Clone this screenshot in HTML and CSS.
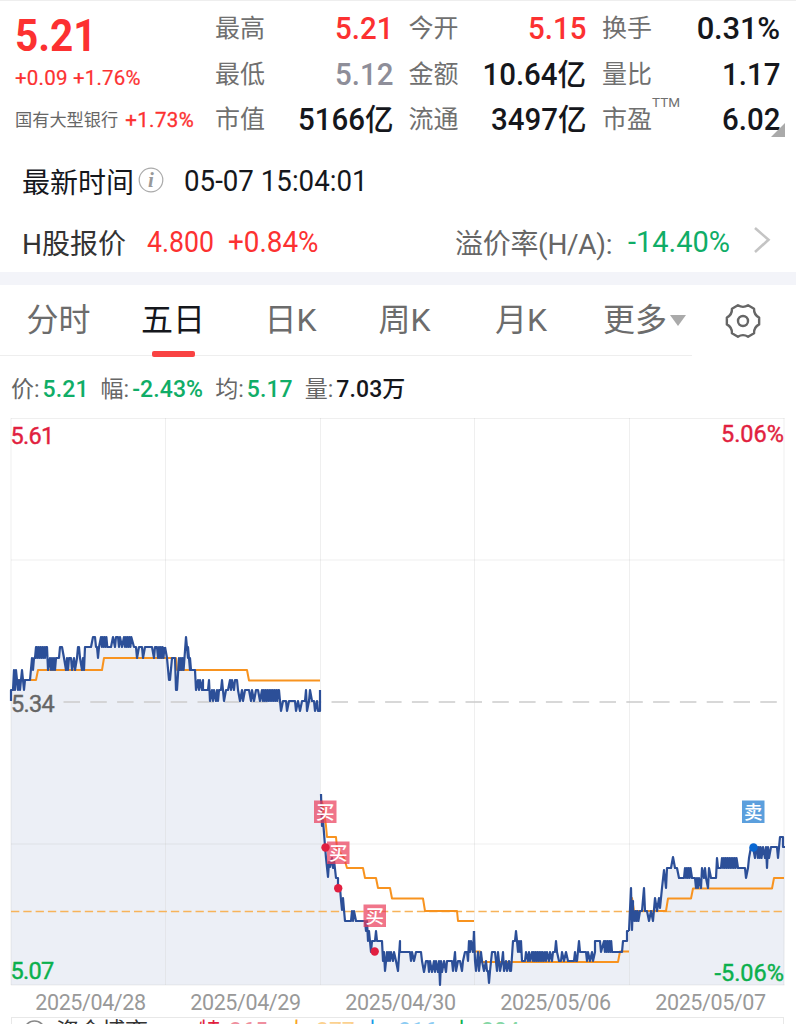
FILE: index.html
```html
<!DOCTYPE html>
<html lang="zh-CN">
<head>
<meta charset="utf-8">
<title>行情</title>
<link rel="stylesheet" href="styles.css">
</head>
<body>
<header class="quote">
  <div class="price-block">
    <div class="price">5.21</div>
    <div class="change">+0.09 +1.76%</div>
    <div class="sector">国有大型银行 <span class="sector-change">+1.73%</span></div>
  </div>
  <dl class="stats">
    <div class="stat"><dt>最高</dt><dd class="up">5.21</dd></div>
    <div class="stat"><dt>今开</dt><dd class="up">5.15</dd></div>
    <div class="stat"><dt>换手</dt><dd class="wide">0.31%</dd></div>
    <div class="stat"><dt>最低</dt><dd class="flat">5.12</dd></div>
    <div class="stat"><dt>金额</dt><dd>10.64<i>亿</i></dd></div>
    <div class="stat"><dt>量比</dt><dd>1.17</dd></div>
    <div class="stat"><dt>市值</dt><dd>5166<i>亿</i></dd></div>
    <div class="stat"><dt>流通</dt><dd>3497<i>亿</i></dd></div>
    <div class="stat"><dt>市盈<sup>TTM</sup></dt><dd>6.02</dd></div>
  </dl>
  <span class="corner"></span>
</header>

<section class="row time-row">
  <span class="time-label">最新时间</span>
  <svg class="info" viewBox="0 0 26 26"><circle cx="13" cy="13" r="11.8"/><text x="13" y="20">i</text></svg>
  <span class="time-value">05-07 15:04:01</span>
</section>
<section class="row h-row">
  <span class="h-label">H股报价</span>
  <span class="h-price">4.800</span>
  <span class="h-change">+0.84%</span>
  <span class="premium-label">溢价率(H/A):</span>
  <span class="premium">-14.40%</span>
  <svg class="chevron" viewBox="0 0 18 28"><path d="M2 2 15.500 13.800 2 26"/></svg>
</section>
<div class="band"></div>

<nav class="tabs">
  <div class="tab-list">
    <span class="tab">分时</span>
    <span class="tab active">五日</span>
    <span class="tab">日K</span>
    <span class="tab">周K</span>
    <span class="tab">月K</span>
    <span class="tab more">更多<b class="caret"></b></span>
  </div>
  <svg class="gear" viewBox="-18 -18 36 36"><path d="M16.140-3.430V3.430Q10.800 6.250 11.040 12.260L5.100 15.690Q0 12.500-5.100 15.690L-11.040 12.260Q-10.800 6.250-16.140 3.430V-3.430Q-10.800-6.250-11.040-12.260L-5.100-15.690Q0-12.500 5.100-15.690L11.040-12.260Q10.800-6.250 16.140-3.430Z"/><circle r="5"/></svg>
</nav>

<div class="legend">
  <span>价:<b class="down">5.21</b></span>
  <span>幅:<b class="down">-2.43%</b></span>
  <span>均:<b class="down">5.17</b></span>
  <span>量:<b>7.03万</b></span>
</div>

<svg class="chart" viewBox="0 412 796 576">
  <g id="areas" class="area"></g>
  <path class="grid" d="M11 418.500H784.500M11 560H784.500M11 844H784.500M11 985H784.500M11 418V985M165.500 418V985M320.500 418V985M474.500 418V985M629.500 418V985M784 418V985"/>
  <path class="mid" d="M63.500 702H784"/>
  <path class="prev" d="M11 911.500H784"/>
  <g id="averages" class="average"></g>
  <g id="prices" class="line"></g>
  <g class="buy">
    <rect x="314" y="800.500" width="22.500" height="22.500"/><text x="325.200" y="819">买</text>
    <rect x="327" y="841.500" width="22.500" height="22.500"/><text x="338.200" y="860">买</text>
    <rect x="363.500" y="904.500" width="22.500" height="22.500"/><text x="374.700" y="923">买</text>
    <circle cx="325.500" cy="847.500" r="4.200"/><circle cx="338.200" cy="888.300" r="4.200"/><circle cx="374.700" cy="951.500" r="4.200"/>
  </g>
  <g class="sell">
    <rect x="742" y="800.500" width="22.500" height="22.500"/><text x="753.200" y="819">卖</text>
    <circle cx="753.500" cy="847.500" r="4.200"/>
  </g>
  <g class="axis">
    <text class="high" x="10.500" y="444">5.61</text>
    <text class="high end" x="784" y="442">5.06%</text>
    <text class="middle" x="11" y="712">5.34</text>
    <text class="low" x="10.500" y="979">5.07</text>
    <text class="low end" x="784" y="981">-5.06%</text>
  </g>
</svg>
<div class="dates"><span>2025/04/28</span><span>2025/04/29</span><span>2025/04/30</span><span>2025/05/06</span><span>2025/05/07</span></div>

<section class="funds">
  <svg class="funds-icon" viewBox="0 0 22 22"><circle cx="11" cy="11" r="10"/></svg>
  <span class="funds-title">资金博弈</span>
  <span class="fund f1">特<em>265</em></span>
  <span class="fund f2">大<em>277</em></span>
  <span class="fund f3">中<em>-316</em></span>
  <span class="fund f4">小<em>204</em></span>
</section>
<script src="chart.js"></script>
</body>
</html>
```
FILE: styles.css
```css
* { box-sizing: border-box; }
body {
  margin: 0;
  width: 796px;
  height: 1024px;
  overflow: hidden;
  background: #fff;
  color: #15171c;
  font-family: Roboto, "Noto Sans CJK SC", sans-serif;
  white-space: nowrap;
}
svg { display: block; flex: none; }

.quote {
  position: relative;
  display: flex;
  height: 150px;
  border-top: 1px solid #eee;
  padding: 4px 16px 0 15px;
}
.price-block { width: 200px; color: #fc3131; }
.price { height: 59px; line-height: 62px; font-size: 45px; font-weight: 700; transform: scaleX(.9); transform-origin: left; }
.change { height: 29px; line-height: 28px; font-size: 20.5px; letter-spacing: .2px; -webkit-text-stroke: .2px; }
.sector { height: 50px; line-height: 54px; font-size: 17.200px; color: #666; display: flex; gap: 7px; }
.sector-change { font-size: 20.500px; letter-spacing: .4px; color: #fc3131; -webkit-text-stroke: .3px; }

.stats {
  flex: 1;
  margin: 0;
  display: grid;
  grid-template-columns: 178px 178px 178px;
  grid-template-rows: 46px 45px 44px;
  column-gap: 15.500px;
}
.stat { display: flex; justify-content: space-between; line-height: 48px; }
dt { font-size: 25px; color: #707070; }
dt sup { font-size: 13.500px; line-height: 0; vertical-align: 21px; }
dd { margin: 0; font-size: 31px; font-weight: 500; transform: scaleX(.95); transform-origin: right; }
dd i { font-style: normal; font-size: 30px; }
dd.wide { transform: none; letter-spacing: -.2px; }
dd.up { color: #fc3131; }
dd.flat { color: #8e8e99; }
.corner {
  position: absolute;
  right: 11px;
  top: 122px;
  border-left: 14px solid transparent;
  border-bottom: 14px solid #aaa;
}

.row { display: flex; align-items: center; height: 61px; padding-left: 22px; }
.time-label { font-size: 28px; }
.info { width: 26px; height: 26px; margin: -2px 20px 0 4px; fill: none; stroke: #aaa; stroke-width: 1.200; }
.info text { font: italic 700 21px "Liberation Serif", serif; fill: #999; stroke: none; text-anchor: middle; }
.time-value { font-size: 29px; transform: scaleX(.955); transform-origin: left; }
.h-label { width: 125px; font-size: 28px; color: #333; }
.h-price, .h-change { font-size: 29px; color: #fc3131; transform-origin: left; }
.h-price { width: 81px; transform: scaleX(.92); }
.h-change { width: 227px; transform: scaleX(.96); }
.premium-label { width: 173px; font-size: 28px; letter-spacing: -.3px; color: #666; }
.premium { width: 125px; font-size: 29px; color: #10ad67; }
.chevron { width: 18px; height: 28px; margin-top: -3px; fill: none; stroke: #c4c4c4; stroke-width: 2.600; }
.band { height: 13px; background: #f3f4f9; }

.tabs { display: flex; height: 71px; }
.tab-list { display: grid; grid-template-columns: 117px 112px 123px 105px 128px 107px; width: 692px; border-bottom: 1px solid #eee; }
.tab { position: relative; font-size: 32px; line-height: 71px; color: #6c6c6c; text-align: center; }
.active { color: #15171c; }
.active::after { content: ""; position: absolute; left: 35px; bottom: -1px; width: 43px; height: 6.500px; border-radius: 2px; background: #f94343; }
.more { display: flex; align-items: center; gap: 3px; padding-left: 18px; }
.caret { border: 8.500px solid transparent; border-top: 11px solid #aaa; border-bottom: 0; }
.gear { width: 36px; height: 36px; margin: 18px 0 0 33px; fill: none; stroke: #666; stroke-width: 2.400; stroke-linejoin: round; }

.legend { display: flex; height: 56px; line-height: 68px; padding-left: 11px; gap: 12px; font-size: 23px; color: #666; }
.legend b { margin-left: 3px; font-weight: 500; letter-spacing: .1px; color: #15171c; }
.legend .down { color: #10ad67; }

.chart { width: 796px; height: 576px; }
.grid { fill: none; stroke: #9996; stroke-width: 1; opacity: .4; }
.mid { stroke: #ccc; stroke-width: 1.500; stroke-dasharray: 16.500 10.300; }
.prev { stroke: #f7b35a; stroke-width: 1.500; stroke-dasharray: 8.300 4; }
.area { fill: #eceff6; }
.line, .average { fill: none; stroke-width: 2; stroke-linejoin: round; }
.line { stroke: #2c4f98; stroke-width: 2.200; }
.average { stroke: #f8931f; }
.buy rect { fill: #e93a58; opacity: .7; }
.buy circle { fill: #e11f40; }
.sell rect { fill: #5b9fdd; }
.sell circle { fill: #0967d2; }
.buy text, .sell text { font-size: 18.500px; font-weight: 500; fill: #fff; text-anchor: middle; }
.axis text { font-size: 23.500px; letter-spacing: -.7px; stroke-width: .4px; }
.axis .end { text-anchor: end; letter-spacing: 0; }
.axis .high { fill: #e11f40; stroke: #e11f40; }
.axis .middle { fill: #666; stroke: #666; }
.axis .low { fill: #0bb04d; stroke: #0bb04d; }

.dates { display: grid; grid-template-columns: repeat(5, 155px); height: 29px; padding-left: 13px; line-height: 30px; font-size: 21.500px; letter-spacing: -.4px; color: #999; text-align: center; }
.funds { display: grid; grid-template-columns: 33px 142px 87px 76px 89px 80px; margin: 0 12px 0 11px; border: 1px solid #e8e8e8; padding: 2px 0 0 11px; height: 36px; font-size: 23px; line-height: 23px; }
.funds-icon { width: 23px; height: 23px; fill: none; stroke: #888; stroke-width: 1.500; }
.funds-title { color: #333; }
.fund em { font-style: normal; margin-left: 8px; opacity: .5; }
.f1 { color: #e11f40; }
.f2 { color: #f8a51f; }
.f3 { color: #1a9ae8; }
.f4 { color: #0bb04d; }
```
FILE: chart.js
```js
// Each session is a list of "x,y" points; "x0~x1,a,b" swings between a and b.
const sessions = [
  "11,701 11,690 13,690 14,670 15,690 16,670 18,690 19,680 20,690 22,670 24,690 25,680 30,680 32,658 33,670 34,658 35,658 36,647 36~46,658,647 47,647 48,670 50,658 51,670 52,658 53,670 54,658 55,670 56,658 59,658 60,647 62,647 64,658 66,670 67,658 68,670 69,658 71,658 72,670 74,658 75,670 77,658 78,647 79,647 80,658 82,670 83,658 84,670 85,647 91,647 93,637 95,637 96,647 97,647 98,658 99,647 101~108,637,647 109,647 111,647 113,637 115,647 116,637 118,637 119,647 120,637 122,647 124,637 125~132,647,637 134,647 136,647 137,658 139,647 142,647 143,658 145,647 152,647 154,658 155,647 157,647 158,658 159~165,647,658",
  "165,647 167,658 169,680 170,680 172,658 175,658 176,690 177,690 179,658 180~184,670,658 186,637 188,658 188,647 190,670 190,658 191,670 195,670 196,690 198,680 199,690 200,680 202,690 203,680 203,690 208,690 209,680 210,701 212,690 213,701 214,690 216,701 217,690 218,701 219,690 221,690 222,680 224,701 226,690 228,690 230,680 231,690 232,680 234,690 235,680 237,680 238,690 240,701 242,690 243,701 245,690 249,690 251,701 252,690 254,701 256,690 258,690 260,701 262~279,690,701 279,690 280,701 281,711 283,701 286,701 287,711 289,701 295,701 296,711 298,701 300,711 302,701 305,701 306,690 307,711 309,701 310,690 312,701 314,701 315,711 317,701 318,711 320,711 320,690",
  "321,794 322,826 323,820 325,846 326,858 328,877 329,862 330,867 332,858 333,868 334,860 336,878 338,878 338,888 340,888 341,900 342,910 343,898 344,910 345,921 351,921 352,911 353,921 354,911 356,921 365,921 366,931 367,921 368,941 369,931 371,952 372,941 375,941 376,931 377,941 382,941 383,961 384,952 385,971 387,952 388,961 389,952 390,961 391,952 393,961 394,952 396,961 398,971 400,941 400,952 410,952 411,961 412,952 414,961 416,952 421,952 422,961 424,972 426,961 428,961 429,972 430,961 432,972 434,961 435,972 436,961 438,972 439,961 440,985 441,961 442,972 444,961 446,972 447,961 452,961 453,971 455,952 456,971 458,961 460,961 462,971 463,961 465,952 467,952 468,961 469,941 470,952 471,941 473,952 474,931",
  "474,931 475,961 476,971 478,952 479,971 481,952 482,961 484,971 486,961 487,971 488,971 489,983 490,971 492,952 495,952 497,971 498,952 500,971 502,961 503,952 504,971 506,961 507,971 509,961 510,971 511,971 513,941 515,941 516,931 517,941 518,952 519,941 520,952 521,941 522,961 525,961 526,952 528,961 529,952 530,961 532~544,952,961 545,952 546,961 547,952 549,961 550,952 552,961 553,952 555,952 556,941 557,952 559,961 561,961 562,952 564,961 566,952 568,961 574,961 575,952 576,961 577,961 579,941 580,952 586,952 587,961 588,952 590,961 592,952 593,961 595,952 595,941 600,941 601,952 604~612,941,952 612,952 622,952 623,941 627,941 627,931 629,931",
  "629,931 631,888 632,930 633,901 633~639,921,911 640,911 642,911 644,888 645,911 647,911 649,921 651,911 653,921 655,898 657,911 659,898 660,908 662,888 664,870 666,888 667,868 671,868 673,857 675,868 677,868 679,878 684,878 685,868 686~691,878,868 692,878 695,878 696,888 697,878 698,888 699,878 701,888 702,868 704,878 705,868 706,878 708,888 709,868 711,878 716,878 717,858 718,868 721,868 722,858 723~737,868,858 738,868 745,868 746,878 748,868 749,858 751,847 753,847 755,858 756,847 757~762,847,858 763,847 765,858 766,847 767,868 768,847 769,858 771,847 773,847 777,847 778,858 780,837 783,837 783,847 785,847"
];
const averages = [
  "11,690 14,690 15,680 36,680 38,670 102,670 104,658 165,658",
  "165,658 176,658 177,670 247,670 249,680.5 320,680.5",
  "321,800 323,805 326,826 327,837 336,837 337,848 344,858 347,868 363,868 365,878 376,878 378,888 390,888 392,898.5 423,898.5 425,911 457,911 458,921 474,921",
  "475,951.5 480,951.5 482,962 618,962 620,951.5 629,951.5",
  "631,898 632,898 634,911 666,911 668,898.5 691,898.5 693,888.5 772,888.5 774,878 784,878"
];
function expand(text) {
  return text.split(" ").map(part => {
    if (!part.includes("~")) return part;
    const [range, a, b] = part.split(",");
    const [from, to] = range.split("~").map(Number);
    const points = [];
    for (let x = from, i = 0; x <= to; x += 0.9, i++) points.push(x.toFixed(1) + "," + (i % 2 ? b : a));
    return points.join(" ");
  }).join(" ");
}
function draw(id, d) {
  const path = document.createElementNS("http://www.w3.org/2000/svg", "path");
  path.setAttribute("d", d);
  document.getElementById(id).append(path);
}
const edges = [11, 165.5, 320.5, 474.5, 629.5, 784];
sessions.forEach((session, i) => {
  const points = expand(session);
  draw("prices", "M" + points);
  draw("areas", `M${edges[i]},985 L${points} L${edges[i + 1]},985Z`);
});
averages.forEach(points => draw("averages", "M" + points));
```
